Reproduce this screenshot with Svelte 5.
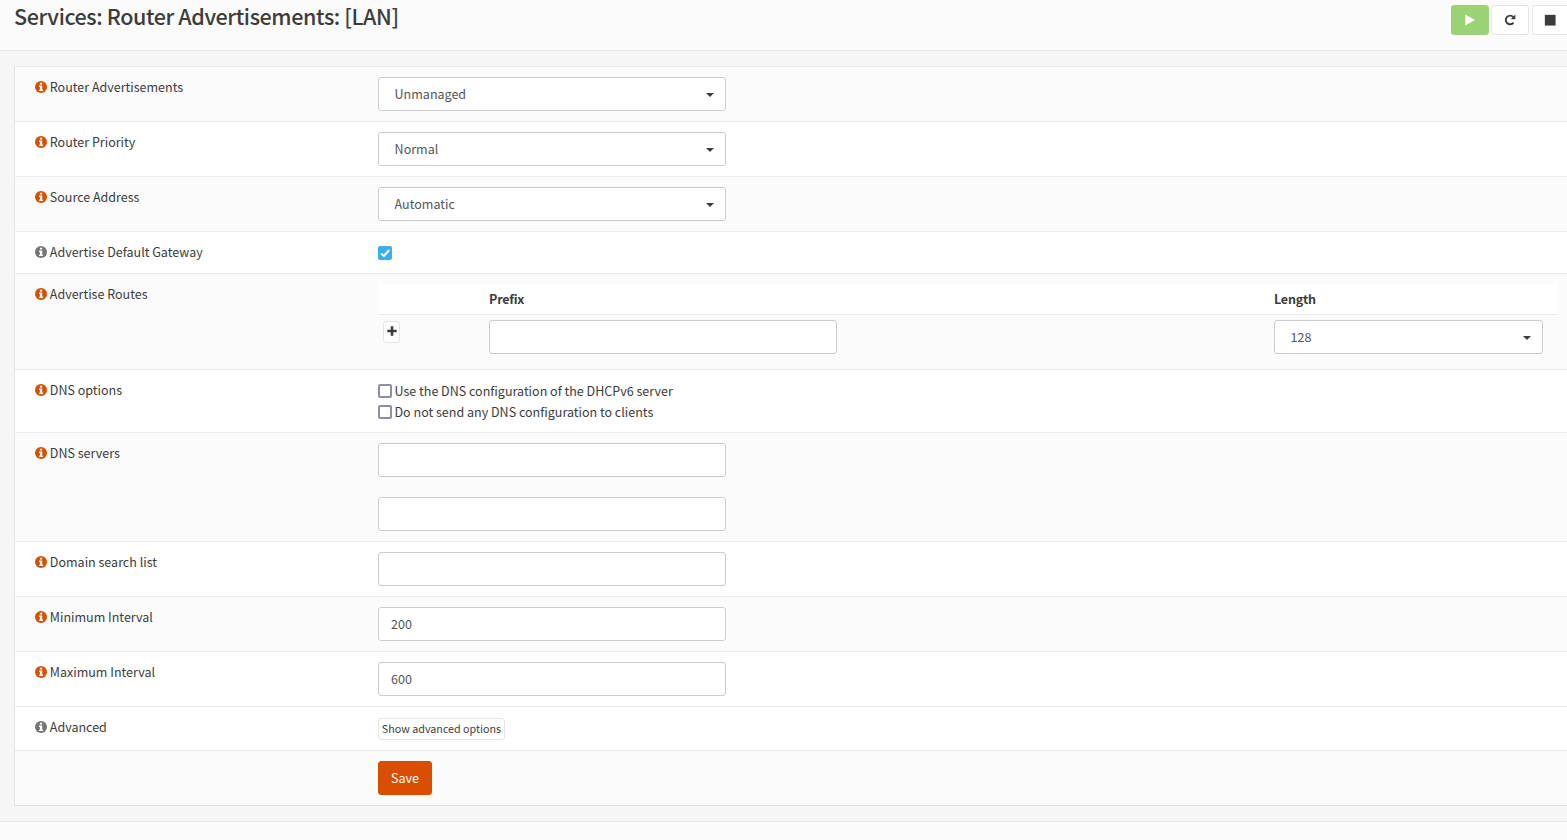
<script>
  let advanced = false;
  let prefix = "";
  let dnsServers = ["", ""];
  let domain = "";
  let minInterval = "200";
  let maxInterval = "600";
  let gateway = true;
  let useDhcp = false;
  let noDns = false;

  const selects = [
    { label: "Router Advertisements", value: "Unmanaged" },
    { label: "Router Priority", value: "Normal" },
    { label: "Source Address", value: "Automatic" },
  ];
</script>

{#snippet label(text, muted)}
  <div class="label" class:muted>
    <svg class="info" viewBox="0 0 12 12">
      <circle cx="6" cy="6" r="6" />
      <path class="letter" d="M4.9 1.8h2.3v1.7h-2.3zM4 4.6h3.2v4.2h.9v1.3h-4.1v-1.3h.9v-2.9h-.9z" />
    </svg>
    <span>{text}</span>
  </div>
{/snippet}

{#snippet dropdown(value)}
  <button type="button" class="dropdown">
    <span>{value}</span>
    <i class="caret"></i>
  </button>
{/snippet}

<main>
  <header>
    <h1>Services: Router Advertisements: [LAN]</h1>
    <div class="actions">
      <button type="button" class="action start" aria-label="Start">
        <svg viewBox="0 0 1792 1792">
          <path
            d="M1576 927l-1328 738q-23 13-39.5 3t-16.5-36v-1472q0-26 16.5-36t39.5 3l1328 738q23 13 23 31t-23 31z"
          />
        </svg>
      </button>
      <button type="button" class="action" aria-label="Restart">
        <svg viewBox="0 0 12 12">
          <path class="arc" d="M9.3 3.1A4.3 4.3 0 1 0 9.5 8.6" />
          <path d="M11.3 .6v4.6h-4.6z" />
        </svg>
      </button>
      <button type="button" class="action" aria-label="Stop">
        <svg viewBox="0 0 1792 1792">
          <path d="M128 128h1600v1600h-1600z" />
        </svg>
      </button>
    </div>
  </header>

  <section class="content">
    <form class="panel">
      {#each selects as item}
        <div class="row">
          {@render label(item.label, false)}
          <div class="field">{@render dropdown(item.value)}</div>
        </div>
      {/each}
      <div class="row">
        {@render label("Advertise Default Gateway", true)}
        <div class="field">
          <label class="check"><input type="checkbox" bind:checked={gateway} /></label>
        </div>
      </div>
      <div class="row">
        {@render label("Advertise Routes", false)}
        <div class="field routes">
          <div class="routes-head">
            <div></div>
            <div>Prefix</div>
            <div>Length</div>
          </div>
          <div class="routes-row">
            <div class="add-cell">
              <button type="button" class="add" aria-label="Add route">
                <svg viewBox="0 0 10 10"><path d="M3.7 .3h2.6v3.4h3.4v2.6h-3.4v3.4h-2.6v-3.4h-3.4v-2.6h3.4z" /></svg>
              </button>
            </div>
            <div><input type="text" class="text" bind:value={prefix} /></div>
            <div class="length">{@render dropdown("128")}</div>
          </div>
        </div>
      </div>
      <div class="row">
        {@render label("DNS options", false)}
        <div class="field">
          <label class="check">
            <input type="checkbox" bind:checked={useDhcp} />
            <span>Use the DNS configuration of the DHCPv6 server</span>
          </label>
          <label class="check">
            <input type="checkbox" bind:checked={noDns} />
            <span>Do not send any DNS configuration to clients</span>
          </label>
        </div>
      </div>
      <div class="row">
        {@render label("DNS servers", false)}
        <div class="field servers">
          <input type="text" class="text" bind:value={dnsServers[0]} />
          <input type="text" class="text" bind:value={dnsServers[1]} />
        </div>
      </div>
      <div class="row">
        {@render label("Domain search list", false)}
        <div class="field"><input type="text" class="text" bind:value={domain} /></div>
      </div>
      <div class="row">
        {@render label("Minimum Interval", false)}
        <div class="field"><input type="text" class="text" bind:value={minInterval} /></div>
      </div>
      <div class="row">
        {@render label("Maximum Interval", false)}
        <div class="field"><input type="text" class="text" bind:value={maxInterval} /></div>
      </div>
      <div class="row plain">
        {@render label("Advanced", true)}
        <div class="field advanced">
          <button type="button" class="small" on:click={() => (advanced = !advanced)}>
            Show advanced options
          </button>
        </div>
      </div>
      <div class="row shaded">
        <div class="label"></div>
        <div class="field"><button type="button" class="save">Save</button></div>
      </div>
    </form>
  </section>
  <footer></footer>
</main>

<style>
  :global(body) {
    background: #fbfbfb;
    overflow: hidden;
  }
  main {
    height: 840px;
    overflow: hidden;
    display: flex;
    flex-direction: column;
    font-family: "Noto Sans CJK SC", "Open Sans", sans-serif;
    font-size: 12.53px;
    line-height: 20px;
    color: #3c3c3b;
  }
  button,
  input {
    font: inherit;
    color: inherit;
    box-sizing: border-box;
    margin: 0;
  }
  button {
    padding: 0;
    cursor: pointer;
  }
  svg {
    display: block;
    fill: currentColor;
  }
  header {
    flex: none;
    box-sizing: border-box;
    height: 51px;
    padding: 5px 0 0 14px;
    display: flex;
    justify-content: space-between;
    border-bottom: 1px solid #e7e7e7;
  }
  h1 {
    margin: 0;
    font-size: 21.5px;
    font-weight: 500;
    line-height: 22px;
    letter-spacing: -0.4px;
    white-space: nowrap;
  }
  .actions {
    display: flex;
    gap: 2px;
    margin-right: -3px;
  }
  .action {
    width: 38px;
    height: 30px;
    flex: none;
    display: flex;
    align-items: center;
    justify-content: center;
    background: #fff;
    border: 1px solid #e5e5e5;
    border-radius: 3px;
  }
  .action:last-child {
    margin-left: 1px;
    padding-right: 2px;
  }
  .action svg {
    width: 12px;
    height: 12px;
  }
  .arc {
    fill: none;
    stroke: currentColor;
    stroke-width: 1.9;
  }
  .action.start {
    background: #9bd275;
    border-color: #9bd275;
    color: #fff;
  }
  .content {
    flex: none;
    padding: 15px 0 15px 14px;
    background: #f6f6f6;
    border-bottom: 1px solid #e7e7e7;
  }
  .panel {
    border-left: 1px solid #e5e5e5;
    border-bottom: 1px solid #e1e1e1;
  }
  .row {
    display: flex;
    padding: 10px 9px 10px 20px;
    background: #fff;
    border-top: 1px solid #ebebeb;
  }
  .row:nth-child(odd),
  .row.shaded {
    background: #fbfbfb;
  }
  .row.plain {
    background: #fff;
  }
  .label {
    width: 343px;
    flex: none;
    height: 20px;
    display: flex;
    align-items: center;
    gap: 2.8px;
  }
  .info {
    width: 12px;
    height: 12px;
    color: #d94f00;
  }
  .muted .info {
    color: #757575;
  }
  .letter {
    fill: #fff;
  }
  .field {
    flex: 1;
  }
  .dropdown {
    width: 348px;
    height: 34px;
    padding: 0 11px 0 15.6px;
    display: flex;
    align-items: center;
    justify-content: space-between;
    background: #fff;
    border: 1px solid #ccc;
    border-radius: 3px;
    color: #555;
  }
  .caret {
    margin-top: 1px;
    border-top: 4px solid #3c3c3b;
    border-left: 4px solid transparent;
    border-right: 4px solid transparent;
  }
  .text {
    display: block;
    width: 348px;
    height: 34px;
    padding: 5px 12px 7px;
    background: #fff;
    border: 1px solid #ccc;
    border-radius: 3px;
    color: #555;
  }
  .check {
    display: flex;
    align-items: center;
    gap: 2.5px;
    height: 21px;
  }
  .check input {
    appearance: none;
    width: 14px;
    height: 14px;
    background: #fff;
    border: 2px solid #8f8f9d;
    border-radius: 2px;
  }
  .check input:checked {
    background: #3daee9
      url("data:image/svg+xml,%3Csvg xmlns='http://www.w3.org/2000/svg' viewBox='0 0 14 14'%3E%3Cpath d='M3.2 7.4l2.6 2.7L11.2 4' fill='none' stroke='white' stroke-width='2'/%3E%3C/svg%3E")
      border-box;
    border: 0;
  }
  .routes-head,
  .routes-row {
    display: grid;
    grid-template-columns: 111px 785px 1fr;
  }
  .routes-head {
    padding: 5px 0;
    background: #fff;
    border-bottom: 1px solid #ebebeb;
    font-weight: 700;
    letter-spacing: -0.2px;
  }
  .routes-row {
    padding: 5px 0;
  }
  .add-cell {
    padding-left: 5px;
  }
  .add {
    display: flex;
    align-items: center;
    justify-content: center;
    width: 17px;
    height: 22px;
    margin-top: 1px;
    padding-bottom: 2px;
    background: #fff;
    border: 1px solid #e5e5e5;
    border-radius: 3px;
  }
  .add svg {
    width: 10px;
    height: 10px;
  }
  .length .dropdown {
    width: 269px;
  }
  .servers {
    display: flex;
    flex-direction: column;
    gap: 20px;
  }
  .advanced {
    height: 23px;
  }
  .small {
    display: block;
    width: 127px;
    height: 22px;
    margin-top: 1px;
    padding-bottom: 1px;
    font-size: 10.74px;
    line-height: 18px;
    white-space: nowrap;
    background: #fff;
    border: 1px solid #e5e5e5;
    border-radius: 3px;
  }
  .save {
    display: block;
    width: 54px;
    height: 34px;
    background: #d94f00;
    border: 1px solid #d94f00;
    border-radius: 3px;
    color: #fff;
  }
  footer {
    flex: 1;
    background: #fbfbfb;
  }
</style>
